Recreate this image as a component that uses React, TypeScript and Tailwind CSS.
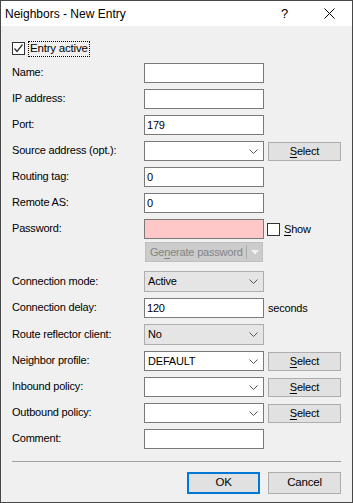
import React from "react";

const font = "font-['Segoe_UI','Liberation_Sans',Arial,sans-serif]";

function Chevron() {
  return (
    <svg width="9" height="5" viewBox="0 0 9 5" className="shrink-0">
      <polyline points="0.5,0.5 4.5,4.5 8.5,0.5" fill="none" stroke="#555" strokeWidth="1" />
    </svg>
  );
}

function TextBox({ value = "", pink = false }: { value?: string; pink?: boolean }) {
  return (
    <div
      className={`flex h-[20px] w-[120px] items-center border border-[#7a7a7a] px-[2px] ${
        pink ? "bg-[#ffc8c8]" : "bg-white"
      }`}
    >
      {value}
    </div>
  );
}

function Combo({ value = "", editable = true }: { value?: string; editable?: boolean }) {
  return (
    <div
      className={`flex w-[120px] items-center justify-between pl-[3px] pr-[5px] border ${
        editable ? "h-[20px] bg-white border-[#7a7a7a]" : "h-[21px] bg-[#e5e5e5] border-[#adadad]"
      }`}
    >
      <span>{value}</span>
      <Chevron />
    </div>
  );
}

function Button({ children, w = "w-[73px]", h = "h-[19px]", focused = false }: { children: React.ReactNode; w?: string; h?: string; focused?: boolean }) {
  return (
    <div
      className={`flex ${w} ${h} items-center justify-center bg-[#e1e1e1] ${
        focused ? "border-2 border-[#0078d7]" : "border border-[#adadad]"
      }`}
    >
      {children}
    </div>
  );
}

function Row({ label, children }: { label: string; children: React.ReactNode }) {
  return (
    <div className="flex items-center">
      <div className="w-[132px] shrink-0 -mt-[1px] whitespace-nowrap">{label}</div>
      {children}
    </div>
  );
}

function SelectBtn() {
  return (
    <div className="ml-[4px]">
      <Button>
        <span>
          <span className="underline underline-offset-2">S</span>elect
        </span>
      </Button>
    </div>
  );
}

export default function App() {
  return (
    <div className={`${font} flex h-[503px] w-[353px] flex-col border border-[#474747] bg-[#f0f0f0] text-[11px] tracking-[-0.2px] leading-none text-black`}>
      {/* Title bar */}
      <div className="flex h-[25px] shrink-0 items-center bg-white pl-[4px]">
        <span className="text-[12px] tracking-normal">Neighbors - New Entry</span>
        <span className="ml-auto mr-[36px] text-[13px]">?</span>
        <svg width="11" height="11" viewBox="0 0 11 11" className="mr-[17px]">
          <line x1="0.5" y1="0.5" x2="10.5" y2="10.5" stroke="#000" strokeWidth="1" />
          <line x1="10.5" y1="0.5" x2="0.5" y2="10.5" stroke="#000" strokeWidth="1" />
        </svg>
      </div>

      <div className="flex flex-1 flex-col px-[11px] pt-[15px]">
        {/* Entry active */}
        <div className="flex h-[15px] items-center">
          <div className="flex h-[13px] w-[13px] items-center justify-center border border-[#333] bg-white">
            <svg width="11" height="11" viewBox="0 0 11 11">
              <polyline points="1.5,5.5 4,8.5 9.5,1.5" fill="none" stroke="#333" strokeWidth="1.3" />
            </svg>
          </div>
          <span className="ml-[3px] flex h-[16px] items-center border border-dotted border-black px-[1px] text-[11.5px]">Entry active</span>
        </div>

        <div className="mt-[7px] flex flex-col gap-[6px]">
          <Row label="Name:"><TextBox /></Row>
          <Row label="IP address:"><TextBox /></Row>
          <Row label="Port:"><TextBox value="179" /></Row>
          <Row label="Source address (opt.):"><Combo /><SelectBtn /></Row>
          <Row label="Routing tag:"><TextBox value="0" /></Row>
          <Row label="Remote AS:"><TextBox value="0" /></Row>
          <Row label="Password:">
            <TextBox pink />
            <div className="ml-[3px] h-[13px] w-[13px] border border-[#333] bg-white" />
            <span className="ml-[4px]">
              <span className="underline underline-offset-2">S</span>how
            </span>
          </Row>
        </div>

        {/* Generate password */}
        <div className="mt-[3px] flex pl-[133px]">
          <div className="flex h-[20px] w-[118px] items-center border border-[#bfbfbf] bg-[#cccccc] text-[#838383]">
            <span className="whitespace-nowrap pl-[4px]">
              Ge<span className="underline underline-offset-2">n</span>erate password
            </span>
            <div className="ml-auto h-[14px] w-px bg-[#a8a8a8]" />
            <svg width="14" height="8" viewBox="0 0 14 8" className="ml-[1px]">
              <polygon points="3,2 11,2 7,6.5" fill="#f2f2f2" />
            </svg>
          </div>
        </div>

        <div className="mt-[9px] flex flex-col gap-[6px]">
          <Row label="Connection mode:"><Combo value="Active" editable={false} /></Row>
          <Row label="Connection delay:">
            <TextBox value="120" />
            <span className="ml-[4px]">seconds</span>
          </Row>
          <Row label="Route reflector client:"><Combo value="No" editable={false} /></Row>
          <Row label="Neighbor profile:"><Combo value="DEFAULT" /><SelectBtn /></Row>
          <Row label="Inbound policy:"><Combo /><SelectBtn /></Row>
          <Row label="Outbound policy:"><Combo /><SelectBtn /></Row>
          <Row label="Comment:"><TextBox /></Row>
        </div>

        {/* Separator */}
        <div className="mt-[12px] h-px w-[329px] bg-[#a0a0a0]" />

        {/* Buttons */}
        <div className="mt-[10px] flex justify-end gap-[8px] text-[11.5px]">
          <Button h="h-[22px]" focused>OK</Button>
          <Button h="h-[22px]">Cancel</Button>
        </div>
      </div>
    </div>
  );
}
